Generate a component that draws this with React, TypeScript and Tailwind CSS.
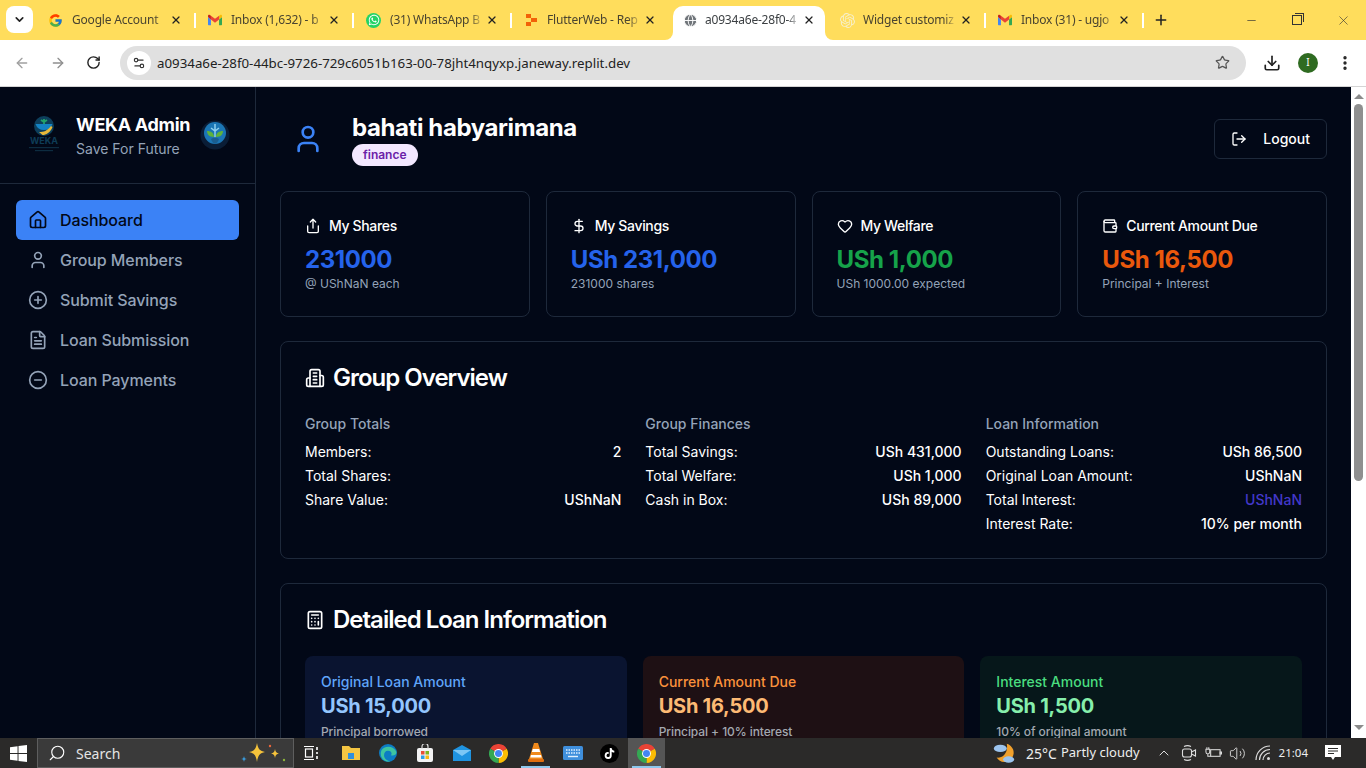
import type { ReactNode } from "react";
import {
  ArrowLeft,
  ArrowRight,
  Calculator,
  ChevronDown,
  ChevronUp,
  CircleMinus,
  CirclePlus,
  DollarSign,
  Download,
  EllipsisVertical,
  FileText,
  Globe,
  Heart,
  House,
  LogOut,
  Minus,
  Plus,
  RotateCw,
  Search,
  Settings2,
  Share,
  Star,
  User,
  Volume2,
  Wallet,
  X,
} from "lucide-react";
import { FcGoogle } from "react-icons/fc";
import { FaTiktok, FaWhatsapp } from "react-icons/fa";
import { SiOpenai } from "react-icons/si";

function GmailIcon() {
  return (
    <svg viewBox="0 0 24 18" className="h-[12px] w-[14px] shrink-0">
      <path d="M1 18h4V8L0 4v12.5C0 17.3.7 18 1 18z" fill="#4285f4" />
      <path d="M19 18h4c.6 0 1-.7 1-1.5V4l-5 4z" fill="#34a853" />
      <path d="M19 1.5V8l5-4V2c0-2-2-2.6-3.2-1.6z" fill="#fbbc04" />
      <path d="M5 8V1.5L12 7l7-5.5V8l-7 5.500z" fill="#ea4335" />
      <path d="M0 2v2l5 4V1.500L3.200.4C2 -.6 0 0 0 2z" fill="#c5221f" />
    </svg>
  );
}

function ReplitIcon() {
  return (
    <svg viewBox="0 0 14 14" className="h-[14px] w-[14px] shrink-0">
      <rect x="2" y="1" width="5" height="4" fill="#f26207" />
      <rect x="7" y="5" width="6" height="4" fill="#f26207" />
      <rect x="2" y="9" width="5" height="4" fill="#f26207" />
    </svg>
  );
}

function ChromeIcon({ size = 18 }: { size?: number }) {
  return (
    <svg viewBox="0 0 24 24" width={size} height={size}>
      <path d="M12 12L1.600 6A12 12 0 0 1 22.400 6Z" fill="#ea4335" />
      <path d="M12 12L22.400 6A12 12 0 0 1 12 24Z" fill="#fbbc04" />
      <path d="M12 12L12 24A12 12 0 0 1 1.600 6Z" fill="#34a853" />
      <circle cx="12" cy="12" r="5.600" fill="#fff" />
      <circle cx="12" cy="12" r="4.400" fill="#4285f4" />
    </svg>
  );
}

// older lucide Building2, the current one in the package has different strokes
function BuildingIcon() {
  return (
    <svg viewBox="0 0 24 24" className="h-5 w-5" fill="none" stroke="currentColor" strokeWidth="2" strokeLinecap="round" strokeLinejoin="round">
      <path d="M6 22V4a2 2 0 0 1 2-2h8a2 2 0 0 1 2 2v18Z" />
      <path d="M6 12H4a2 2 0 0 0-2 2v6a2 2 0 0 0 2 2h2" />
      <path d="M18 9h2a2 2 0 0 1 2 2v9a2 2 0 0 1-2 2h-2" />
      <path d="M10 6h4M10 10h4M10 14h4M10 18h4" />
    </svg>
  );
}

type TabInfo = {
  title: string;
  icon: ReactNode;
  active?: boolean;
  gap: string;
  pad: string;
  divider?: boolean;
};

const tabs: TabInfo[] = [
  { title: "Google Account", icon: <FcGoogle className="h-[15px] w-[15px] shrink-0" />, gap: "gap-[9px]", pad: "pl-[10px]", divider: true },
  { title: "Inbox (1,632) - b", icon: <GmailIcon />, gap: "gap-[9px]", pad: "pl-[12px]", divider: true },
  {
    title: "(31) WhatsApp B",
    icon: (
      <span className="flex h-[15px] w-[15px] shrink-0 items-center justify-center rounded-full bg-[#25d366]">
        <FaWhatsapp className="h-[12px] w-[12px] text-white" />
      </span>
    ),
    gap: "gap-[9px]",
    pad: "pl-[12px]",
    divider: true,
  },
  { title: "FlutterWeb - Rep", icon: <ReplitIcon />, gap: "gap-[9px]", pad: "pl-[12px]" },
  {
    title: "a0934a6e-28f0-4",
    icon: <Globe className="h-[15px] w-[15px] shrink-0 fill-[#6f7479] text-white" strokeWidth={1.500} />,
    active: true,
    gap: "gap-[7px]",
    pad: "pl-[10px]",
  },
  { title: "Widget customiz", icon: <SiOpenai className="h-[15px] w-[15px] shrink-0 text-[#f7efc9]" />, gap: "gap-[8px]", pad: "pl-[12px]", divider: true },
  { title: "Inbox (31) - ugjo", icon: <GmailIcon />, gap: "gap-[9px]", pad: "pl-[12px]", divider: true },
];

const tabTextClass =
  "flex-1 overflow-hidden whitespace-nowrap text-[12px] tracking-[-0.2px] [mask-image:linear-gradient(to_right,black_85%,transparent)]";

function BrowserTab({ title, icon, active, gap, pad, divider }: TabInfo) {
  if (active) {
    return (
      <div className="relative mx-[3px] mt-[6px] flex h-[34px] w-[152px] items-center rounded-t-[10px] bg-white pb-[6px] pl-[10px] pr-[10px]">
        <span className="absolute bottom-0 left-[-8px] h-[8px] w-[8px] bg-white">
          <span className="block h-full w-full rounded-br-[8px] bg-[#ffdd5c]" />
        </span>
        <span className="absolute bottom-0 right-[-8px] h-[8px] w-[8px] bg-white">
          <span className="block h-full w-full rounded-bl-[8px] bg-[#ffdd5c]" />
        </span>
        <span className={`flex min-w-0 flex-1 items-center ${gap}`}>
          {icon}
          <span className={`${tabTextClass} text-[#3c4043]`}>{title}</span>
        </span>
        <X className="ml-[2px] h-[12px] w-[12px] shrink-0 text-[#222]" strokeWidth={2.500} />
      </div>
    );
  }
  return (
    <div className={`mt-[6px] flex h-[34px] w-[158px] items-center pb-[6px] pr-[13px] ${pad}`}>
      <span className={`flex min-w-0 flex-1 items-center ${gap}`}>
        {icon}
        <span className={`${tabTextClass} text-[#4a4430]`}>{title}</span>
      </span>
      <X className="ml-[2px] h-[12px] w-[12px] shrink-0 text-[#222]" strokeWidth={2.500} />
      <span className={`ml-[12px] mr-[-13px] h-[15px] w-[2px] shrink-0 ${divider ? "bg-white" : ""}`} />
    </div>
  );
}

function BrowserChrome() {
  return (
    <div className="font-['Noto_Sans',sans-serif]">
      <div className="flex h-[40px] bg-[#ffdd5c]">
        <div className="ml-[6px] mr-[5px] mt-[6px] flex h-[27px] w-[27px] items-center justify-center rounded-[8px] bg-white">
          <ChevronDown className="h-[13px] w-[13px] text-[#222]" strokeWidth={3} />
        </div>
        {tabs.map((t) => (
          <BrowserTab key={t.title} {...t} />
        ))}
        <Plus className="ml-[9px] mt-[12px] h-[16px] w-[16px] text-[#222]" strokeWidth={2.250} />
        <div className="ml-auto flex h-[40px] items-start">
          <div className="flex h-[40px] w-[46px] items-center justify-center">
            <Minus className="h-[13px] w-[13px] text-[#333]" strokeWidth={1.250} />
          </div>
          <div className="flex h-[40px] w-[46px] items-center justify-center">
            <span className="relative block h-[10px] w-[10px] border border-[#333]">
              <span className="absolute right-[-3px] top-[-3px] h-[9px] w-[9px] border-r border-t border-[#333]" />
            </span>
          </div>
          <div className="flex h-[40px] w-[46px] items-center justify-center">
            <X className="h-[15px] w-[15px] text-[#333]" strokeWidth={1} />
          </div>
        </div>
      </div>
      <div className="flex h-[47px] items-center border-b border-[#d4d4d4] bg-white pb-[1px]">
        <div className="flex w-[120px] shrink-0 items-center pl-[14px]">
          <ArrowLeft className="h-[16px] w-[16px] text-[#a0a0a0]" strokeWidth={2} />
          <ArrowRight className="ml-[20px] h-[16px] w-[16px] text-[#8f8f8f]" strokeWidth={2} />
          <RotateCw className="ml-[20px] h-[15px] w-[15px] text-[#222]" strokeWidth={2.250} />
        </div>
        <div className="flex h-[34px] w-[1126px] shrink-0 items-center rounded-full bg-[#e0e0e0] pl-[7px] pr-[16px]">
          <span className="flex h-[24px] w-[24px] items-center justify-center rounded-full bg-white">
            <Settings2 className="h-[14px] w-[14px] text-[#333]" strokeWidth={2} />
          </span>
          <span className="ml-[6px] mt-[2px] text-[13.300px] text-[#222]">
            a0934a6e-28f0-44bc-9726-729c6051b163-00-78jht4nqyxp.janeway.replit.dev
          </span>
          <Star className="ml-auto h-[15px] w-[15px] text-[#555]" strokeWidth={2} />
        </div>
        <Download className="ml-[17px] h-[18px] w-[18px] text-[#222]" strokeWidth={2.250} />
        <span className="ml-[17px] flex h-[20px] w-[20px] items-center justify-center rounded-full bg-[#2f6b21] text-[10px] text-white">
          I
        </span>
        <EllipsisVertical className="ml-[18px] h-[18px] w-[18px] text-[#222]" strokeWidth={2.500} />
      </div>
    </div>
  );
}

function WekaLogo() {
  return (
    <svg viewBox="0 0 40 40" className="h-[40px] w-[40px] shrink-0">
      <circle cx="20" cy="11" r="10" fill="#0d3f5c" />
      <path d="M11.500 9h17a9 9 0 0 1-17 0z" fill="#1583c4" />
      <path d="M15 17c5 0 8-1 12-6l1.500 1c-2 5.500-6.500 8-10 8z" fill="#e8b93a" />
      <path d="M20 9V4M20 7l-3-2M20 7l3-2" stroke="#23a36b" strokeWidth="1.800" />
      <text x="20" y="29" textAnchor="middle" fontSize="9" fontWeight="700" fill="#0e3c56" fontFamily="Inter, sans-serif">
        WEKA
      </text>
      <rect x="5" y="32" width="30" height="1.200" fill="#0d2c40" />
      <rect x="11" y="35" width="18" height="1.200" fill="#0d2c40" />
    </svg>
  );
}

function EarthLogo() {
  return (
    <svg viewBox="0 0 30 30" className="h-[30px] w-[30px] shrink-0">
      <circle cx="15" cy="15" r="14.500" fill="#0a1d36" />
      <circle cx="15" cy="13" r="11" fill="#1b76b5" />
      <path d="M15 4v18M11 8l4 3 4-3" stroke="#8fd0ee" strokeWidth="1.500" fill="none" />
      <path d="M14 17c-5 0-7-3-7-6 4 0 7 2 7 6zM16 17c5 0 7-3 7-6-4 0-7 2-7 6z" fill="#5fb33b" />
      <path d="M11 19c2 6 6 6 8 0l-4-2z" fill="#1a5d8f" />
    </svg>
  );
}

const navItems = [
  { label: "Dashboard", icon: House, active: true },
  { label: "Group Members", icon: User },
  { label: "Submit Savings", icon: CirclePlus },
  { label: "Loan Submission", icon: FileText },
  { label: "Loan Payments", icon: CircleMinus },
];

function Sidebar() {
  return (
    <aside className="h-full w-[256px] shrink-0 border-r border-[#1e293b]">
      <div className="flex items-center border-b border-[#1e293b] p-6">
        <WekaLogo />
        <div className="ml-3 mr-[10px] w-[114px] shrink-0">
          <div className="whitespace-nowrap text-lg font-bold leading-7 tracking-[-0.3px] text-white">WEKA Admin</div>
          <div className="text-sm text-[#94a3b8]">Save For Future</div>
        </div>
        <EarthLogo />
      </div>
      <nav className="p-4">
        {navItems.map(({ label, icon: Icon, active }) => (
          <div
            key={label}
            className={`flex h-10 items-center gap-3 rounded-md px-3 font-medium tracking-[-0.08px] ${
              active ? "bg-[#3b82f6] text-[#020817]" : "text-[#94a3b8]"
            }`}
          >
            <Icon className="h-5 w-5" />
            {label}
          </div>
        ))}
      </nav>
    </aside>
  );
}

const statCards = [
  { title: "My Shares", icon: Share, value: "231000", note: "@ UShNaN each", color: "text-[#2563eb]" },
  { title: "My Savings", icon: DollarSign, value: "USh 231,000", note: "231000 shares", color: "text-[#2563eb]" },
  { title: "My Welfare", icon: Heart, value: "USh 1,000", note: "USh 1000.00 expected", color: "text-[#16a34a]" },
  { title: "Current Amount Due", icon: Wallet, value: "USh 16,500", note: "Principal + Interest", color: "text-[#ea580c]" },
];

const overview: { heading: string; rows: [string, string, string?][] }[] = [
  {
    heading: "Group Totals",
    rows: [
      ["Members:", "2"],
      ["Total Shares:", ""],
      ["Share Value:", "UShNaN"],
    ],
  },
  {
    heading: "Group Finances",
    rows: [
      ["Total Savings:", "USh 431,000"],
      ["Total Welfare:", "USh 1,000"],
      ["Cash in Box:", "USh 89,000"],
    ],
  },
  {
    heading: "Loan Information",
    rows: [
      ["Outstanding Loans:", "USh 86,500"],
      ["Original Loan Amount:", "UShNaN"],
      ["Total Interest:", "UShNaN", "text-[#4338ca]"],
      ["Interest Rate:", "10% per month"],
    ],
  },
];

const loanCards = [
  {
    label: "Original Loan Amount",
    value: "USh 15,000",
    note: "Principal borrowed",
    bg: "bg-[#0a1430]",
    labelColor: "text-[#60a5fa]",
    valueColor: "text-[#93c5fd]",
  },
  {
    label: "Current Amount Due",
    value: "USh 16,500",
    note: "Principal + 10% interest",
    bg: "bg-[#1e1014]",
    labelColor: "text-[#fb923c]",
    valueColor: "text-[#fdba74]",
  },
  {
    label: "Interest Amount",
    value: "USh 1,500",
    note: "10% of original amount",
    bg: "bg-[#06171a]",
    labelColor: "text-[#4ade80]",
    valueColor: "text-[#86efac]",
  },
];

function Dashboard() {
  return (
    <main className="h-full min-w-0 flex-1 overflow-hidden px-6 pt-[25px]">
      {/* Header */}
      <div className="mb-[25px] flex items-center justify-between">
        <div className="flex items-center">
          <div className="flex h-[54px] w-[56px] items-center justify-center">
            <User className="h-8 w-8 text-[#3b82f6]" />
          </div>
          <div className="ml-4">
            <h1 className="text-2xl font-bold leading-8 tracking-[-0.4px] text-white">bahati habyarimana</h1>
            <span className="flex h-[22px] w-fit items-center rounded-full bg-[#f3e8ff] px-[11px] text-xs font-semibold text-[#6b21a8]">
              finance
            </span>
          </div>
        </div>
        <button className="flex h-10 items-center gap-4 rounded-md border border-[#1e293b] px-4 text-sm font-medium text-white">
          <LogOut className="h-4 w-4" />
          Logout
        </button>
      </div>

      {/* Stat cards */}
      <div className="mb-6 grid grid-cols-4 gap-4">
        {statCards.map(({ title, icon: Icon, value, note, color }) => (
          <div key={title} className="rounded-lg border border-[#1e293b] p-6">
            <div className="mb-2 flex items-center gap-2 text-sm font-medium tracking-tight text-white">
              <Icon className="h-4 w-4" />
              {title}
            </div>
            <div className={`text-2xl font-bold leading-8 tracking-[-0.4px] ${color}`}>{value}</div>
            <div className="text-xs text-[#94a3b8]">{note}</div>
          </div>
        ))}
      </div>

      {/* Group overview */}
      <section className="mb-6 rounded-lg border border-[#1e293b] p-6">
        <h2 className="mb-6 flex items-center gap-2 text-2xl font-semibold leading-6 tracking-[-1px] text-white">
          <BuildingIcon />
          Group Overview
        </h2>
        <div className="grid grid-cols-3 gap-6">
          {overview.map((col) => (
            <div key={col.heading}>
              <h3 className="mb-2 text-sm font-medium text-[#94a3b8]">{col.heading}</h3>
              <div className="space-y-1">
                {col.rows.map(([k, v, cls]) => (
                  <div key={k} className="flex h-5 justify-between text-sm text-white">
                    <span>{k}</span>
                    <span className={`font-medium ${cls ?? ""}`}>{v}</span>
                  </div>
                ))}
              </div>
            </div>
          ))}
        </div>
      </section>

      {/* Loan details */}
      <section className="rounded-lg border border-[#1e293b] p-6">
        <h2 className="mb-6 flex items-center gap-2 text-2xl font-semibold leading-6 tracking-[-1px] text-white">
          <Calculator className="h-5 w-5" />
          Detailed Loan Information
        </h2>
        <div className="grid grid-cols-3 gap-4">
          {loanCards.map((c) => (
            <div key={c.label} className={`rounded-lg p-4 ${c.bg}`}>
              <div className={`text-sm font-medium ${c.labelColor}`}>{c.label}</div>
              <div className={`text-xl font-bold tracking-[-0.25px] ${c.valueColor}`}>{c.value}</div>
              <div className="mt-1 text-xs font-medium tracking-[-0.08px] text-[#a3a8b0]">{c.note}</div>
            </div>
          ))}
        </div>
      </section>
    </main>
  );
}

function PageScrollbar() {
  return (
    <div className="flex h-full w-[15px] shrink-0 flex-col items-center bg-white pb-[8px] pt-[7px]">
      <svg viewBox="0 0 10 5" className="h-[5px] w-[10px]">
        <path d="M5 0l5 5H0z" fill="#8b8b8b" />
      </svg>
      <div className="mt-[5px] h-[377px] w-[9px] rounded-full bg-[#8f8f8f]" />
      <svg viewBox="0 0 10 5" className="mt-auto h-[5px] w-[10px]">
        <path d="M0 0h10L5 5z" fill="#8b8b8b" />
      </svg>
    </div>
  );
}

function WindowsLogo() {
  return (
    <svg viewBox="0 0 18 18" className="h-[17px] w-[17px]">
      <path d="M0 2.500l8-1.200v7.200H0zM9 1.100L18 0v8.500H9zM0 9.500h8v7.200l-8-1.200zM9 9.500h9V18l-9-1.100z" fill="#fff" />
    </svg>
  );
}

const AppSlot = ({ children, underline, active }: { children: ReactNode; underline?: boolean; active?: boolean }) => (
  <div className={`relative flex h-[30px] w-[37px] items-center justify-center ${active ? "bg-[#555]" : ""}`}>
    {children}
    {underline && <span className="absolute bottom-0 left-[4px] right-[4px] h-[2px] bg-[#8cc8ee]" />}
  </div>
);

function Taskbar() {
  return (
    <div className="flex h-[30px] shrink-0 items-center bg-[#2b2a29] font-['Noto_Sans',sans-serif] text-white">
      <div className="flex h-full w-[37px] items-center justify-center">
        <WindowsLogo />
      </div>
      <div className="flex h-full w-[257px] items-center border border-[#5e5e5e] bg-[#3a3a3a] pl-[10px]">
        <Search className="h-[18px] w-[18px] -scale-x-100 text-white" strokeWidth={1.500} />
        <span className="ml-[10px] text-[14px] text-[#e5e5e5]">Search</span>
        <svg viewBox="0 0 50 24" className="ml-auto mr-[5px] h-[24px] w-[50px]">
          <path d="M19 2c1 6 3 8 8 9-5 1-7 3-8 10-1-7-3-9-8-10 5-1 7-3 8-9z" fill="#f5c33b" />
          <path d="M37 8c.5 3 1.500 4 4 4.500-2.500.5-3.500 1.500-4 4.500-.5-3-1.500-4-4-4.500 2.500-.5 3.500-1.500 4-4.500z" fill="#f5c33b" />
          <path d="M6 15c.3 2 1 2.700 3 3-2 .3-2.700 1-3 3-.3-2-1-2.700-3-3 2-.3 2.700-1 3-3z" fill="#3a9bdc" />
          <circle cx="32" cy="5" r="1.200" fill="#e8663c" />
          <circle cx="46" cy="19" r="1.200" fill="#8bb33b" />
        </svg>
      </div>
      <div className="ml-[1px] flex h-full items-center">
        <AppSlot>
          <svg viewBox="0 0 16 16" className="mr-[5px] h-[16px] w-[16px]" fill="none" stroke="#fff" strokeWidth="1.200">
            <path d="M1 1.500h10M1 14.500h10" />
            <rect x="2.500" y="4" width="7" height="8" />
            <path d="M14 2v3M14 7v2M14 11v3" strokeWidth="1.600" />
          </svg>
        </AppSlot>
        <AppSlot>
          <svg viewBox="0 0 18 16" className="h-[16px] w-[18px]">
            <path d="M0 1h7l2 2h9v12H0z" fill="#f4c542" />
            <rect x="6" y="8" width="6" height="6" fill="#2f8fdc" />
          </svg>
        </AppSlot>
        <AppSlot>
          <svg viewBox="0 0 24 24" className="h-[18px] w-[18px]">
            <circle cx="12" cy="12" r="12" fill="#0c7cc4" />
            <path d="M3 9c3-7 16-8 20 1 1 4-3 6-7 5 2-3 0-6-4-6-4 0-6 4-5 8 1 3 4 6 8 6-7 2-15-5-12-14z" fill="#3ec4a0" />
          </svg>
        </AppSlot>
        <AppSlot>
          <svg viewBox="0 0 16 18" className="h-[18px] w-[16px]">
            <rect x="0" y="4" width="16" height="14" rx="2" fill="#f3f3f3" />
            <path d="M5 5V2.500a3 3 0 0 1 6 0V5" stroke="#ddd" strokeWidth="1.200" fill="none" />
            <rect x="4" y="7" width="3.500" height="3.500" fill="#e94f35" />
            <rect x="8.500" y="7" width="3.500" height="3.500" fill="#7db51f" />
            <rect x="4" y="11.500" width="3.500" height="3.500" fill="#2d9fe6" />
            <rect x="8.500" y="11.500" width="3.500" height="3.500" fill="#f7b913" />
          </svg>
        </AppSlot>
        <AppSlot>
          <svg viewBox="0 0 18 16" className="h-[16px] w-[18px]">
            <path d="M0 5l9-5 9 5v11H0z" fill="#1f93e0" />
            <path d="M0 5l9 6 9-6" fill="#7cc7f5" />
          </svg>
        </AppSlot>
        <AppSlot>
          <ChromeIcon size={19} />
        </AppSlot>
        <AppSlot underline>
          <svg viewBox="0 0 18 20" className="h-[20px] w-[18px]">
            <path d="M7 0h4l5 16H2z" fill="#f08a1c" />
            <path d="M5.800 6h6.400l1 3H4.800zM4 12h10l.7 2.500H3.300z" fill="#fff" />
            <rect x="1" y="16" width="16" height="3" rx="1" fill="#e06f10" />
          </svg>
        </AppSlot>
        <AppSlot>
          <svg viewBox="0 0 20 14" className="h-[14px] w-[20px]">
            <rect width="20" height="14" rx="1.500" fill="#3f8fdc" />
            <path d="M3 4h14M3 7h14" stroke="#dff0ff" strokeWidth="1.400" strokeDasharray="1.500 1" />
            <path d="M5 10.500h10" stroke="#dff0ff" strokeWidth="1.400" />
          </svg>
        </AppSlot>
        <AppSlot>
          <span className="flex h-[19px] w-[19px] items-center justify-center rounded-full bg-black">
            <FaTiktok className="h-[11px] w-[11px] text-white" />
          </span>
        </AppSlot>
        <AppSlot active underline>
          <ChromeIcon size={19} />
        </AppSlot>
      </div>
      <div className="ml-auto flex h-full items-center">
        <svg viewBox="0 0 26 26" className="h-[24px] w-[24px]">
          <path d="M16 3a10 10 0 1 1-11 15c6 1 13-5 11-15z" fill="#f0a02c" />
          <ellipse cx="9" cy="8" rx="7" ry="4" fill="#9cc4ee" />
          <ellipse cx="18" cy="20" rx="6" ry="3.500" fill="#9cc4ee" />
        </svg>
        <span className="ml-[10px] text-[14px] text-[#eee]">25°C</span>
        <span className="ml-[4px] text-[13px] text-[#eee]">Partly cloudy</span>
        <ChevronUp className="ml-[16px] h-[16px] w-[16px] text-[#ddd]" strokeWidth={1.500} />
        <svg viewBox="0 0 16 16" className="ml-[9px] h-[16px] w-[16px]" fill="none" stroke="#ddd" strokeWidth="1.100">
          <rect x="1.500" y="4" width="9" height="8" rx="2" />
          <path d="M10.500 7l4-2v6l-4-2M3 1.500c2-1 5-1 7 0M3 14.500c2 1 5 1 7 0" />
        </svg>
        {/* plugged-in battery */}
        <svg viewBox="0 0 18 14" className="ml-[8px] h-[14px] w-[17px]" fill="none" stroke="#ddd" strokeWidth="1.100">
          <rect x="6" y="3.500" width="10" height="7" />
          <path d="M16 6v2h1.500V6z" />
          <path d="M1 3v3a2 2 0 0 0 4 0V3zM2 3V.8M4 3V.8M3 8v2.500h3" />
        </svg>
        <Volume2 className="ml-[7px] h-[17px] w-[17px] text-[#ddd]" strokeWidth={1.300} />
        {/* wifi arcs fan out from the lower right */}
        <svg viewBox="0 0 16 16" className="ml-[9px] h-[16px] w-[16px]" fill="none" stroke="#ddd" strokeWidth="1.200">
          <path d="M1 15A14 14 0 0 1 15 1M4.500 15A10.500 10.500 0 0 1 15 4.500M8 15a7 7 0 0 1 7-7" />
          <circle cx="13.500" cy="13.500" r="1.500" fill="#ddd" stroke="none" />
        </svg>
        <span className="ml-[8px] text-[11.500px] text-[#eee]">21:04</span>
        <div className="ml-[17px] mr-[25px] h-[16px] w-[16px]">
          <svg viewBox="0 0 16 16" className="h-[16px] w-[16px]">
            <path d="M0 0h16v12h-6l-2 3-2-3H0z" fill="#fff" />
            <path d="M3 3.500h10M3 6h10M3 8.500h6" stroke="#2b2a29" />
          </svg>
        </div>
      </div>
    </div>
  );
}

export default function App() {
  return (
    <div className="flex h-screen w-full flex-col overflow-hidden bg-[#020817] font-['Inter',sans-serif]">
      <BrowserChrome />
      <div className="flex min-h-0 flex-1">
        <Sidebar />
        <Dashboard />
        <PageScrollbar />
      </div>
      <Taskbar />
    </div>
  );
}
